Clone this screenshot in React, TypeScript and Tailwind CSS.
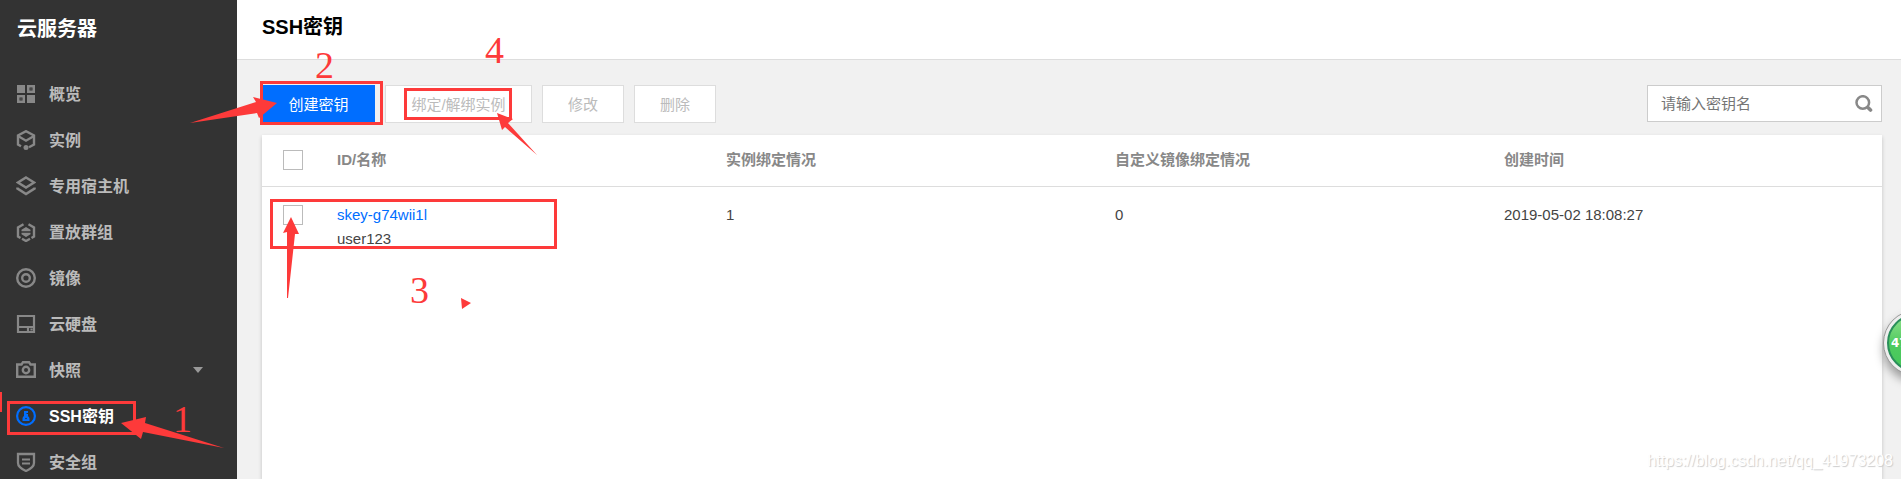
import { ReactNode, useState } from 'react';

const RED = '#fd3a3a';

interface NavItem {
  label: string;
  icon: ReactNode;
  active?: boolean;
  expandable?: boolean;
}

interface SshKey {
  id: string;
  name: string;
  instances: number;
  images: number;
  createdAt: string;
}

const navItems: NavItem[] = [
  {
    label: '概览',
    icon: (
      <>
        <path fill="currentColor" d="M1 1h8v8H1zM11 11h8v8h-8z" />
        <path strokeWidth={2.5} d="M12.25 2.25h5.5v5.5h-5.5zM2.25 12.25h5.5v5.5h-5.5z" />
        <path fill="currentColor" d="M14.5 4.5h1v1h-1zM4.5 14.5h1v1h-1z" />
      </>
    ),
  },
  {
    label: '实例',
    icon: (
      <>
        <path strokeWidth={2.4} d="M5 16.2 2 14.5v-9L10 1.2l8 4.3v9L13 17.2" />
        <path strokeWidth={2.4} d="m2 6 8 4.7L18 6" />
        <circle cx={10} cy={17.5} r={2.5} fill="currentColor" />
      </>
    ),
  },
  {
    label: '专用宿主机',
    icon: (
      <>
        <path strokeWidth={2.4} d="m10 1.500 8 5-8 5-8-5z" />
        <path strokeWidth={2.6} d="M1.500 11.500v1L10 18l8.500-5.500v-1" />
      </>
    ),
  },
  {
    label: '置放群组',
    icon: (
      <>
        <path strokeWidth={2.4} d="M7.500 2.200 2 5.500v9l2.500 1.500M12.500 2.200 18 5.500v9L15.500 16M6 16.800l4 2.200 4-2.200" />
        <path fill="currentColor" d="m10 5 4.500 2.800v1.400h-9V7.800zM10 15l4.500-2.800v-1.400h-9v1.400z" />
      </>
    ),
  },
  {
    label: '镜像',
    icon: (
      <>
        <circle cx={10} cy={10} r={8.8} strokeWidth={2.4} />
        <circle cx={10} cy={10} r={3.8} strokeWidth={2.4} />
      </>
    ),
  },
  {
    label: '云硬盘',
    icon: <path strokeWidth={2.2} d="M2 2h16v16H2zM2 13h16M12 13v5M15.500 14.500v2" />,
  },
  {
    label: '快照',
    expandable: true,
    icon: (
      <>
        <path strokeWidth={2.4} d="M1.200 4.500h4.300l1.500-2.300h6l1.500 2.300h4.300v12.300H1.200z" />
        <circle cx={10} cy={10} r={3.2} strokeWidth={2.4} />
      </>
    ),
  },
  {
    label: 'SSH密钥',
    active: true,
    icon: (
      <>
        <circle cx={10} cy={10} r={8.9} strokeWidth={2.2} />
        <path fill="currentColor" d="M8 5h4v2h-1.500v1H12v2h-.5c1.500.8 2 1.600 2 2.800V15h-7v-2.200c0-1.200.5-2 1.500-2.800z" />
        <circle cx={10} cy={12.5} r={0.8} fill="#333" />
      </>
    ),
  },
  {
    label: '安全组',
    icon: (
      <>
        <path strokeWidth={2.3} d="M2 2h16v9c0 3.500-3 5.800-8 8-5-2.200-8-4.500-8-8z" />
        <path strokeWidth={2} d="M6 7.500h8M6 11.500h8" />
      </>
    ),
  },
];

const sshKeys: SshKey[] = [
  { id: 'skey-g74wii1l', name: 'user123', instances: 1, images: 0, createdAt: '2019-05-02 18:08:27' },
];

function Sidebar() {
  return (
    <aside className="w-[237px] shrink-0 bg-[#333] font-bold">
      <h2 className="px-[17px] pt-[13px] text-xl leading-8 text-white">云服务器</h2>
      <nav className="mt-[26px]">
        {navItems.map((item) => (
          <a
            key={item.label}
            href="#"
            className={`flex h-[46px] items-center gap-[13px] px-4 text-base ${item.active ? 'text-white' : 'text-[#bbb]'}`}
          >
            <svg
              viewBox="0 0 20 20"
              fill="none"
              stroke="currentColor"
              strokeWidth={0}
              className={`size-5 ${item.active ? 'text-[#006eff]' : 'text-[#888]'}`}
            >
              {item.icon}
            </svg>
            <span className="grow pt-0.5">{item.label}</span>
            {item.expandable && (
              <svg viewBox="0 0 10 6" className="mr-[18px] h-[6px] w-[10px] fill-[#999]">
                <path d="M0 0h10L5 6z" />
              </svg>
            )}
          </a>
        ))}
      </nav>
    </aside>
  );
}

function Toolbar() {
  const [keyword, setKeyword] = useState('');
  const plain = 'h-[38px] border border-[#ddd] bg-white pt-0.5 text-[#bbb]';

  return (
    <div className="flex items-start gap-[10px]">
      <button className="h-[38px] w-[113px] bg-[#006eff] pt-0.5 text-white">创建密钥</button>
      <button className={`${plain} w-[147px]`} disabled>
        绑定/解绑实例
      </button>
      <button className={`${plain} w-[82px]`} disabled>
        修改
      </button>
      <button className={`${plain} w-[82px]`} disabled>
        删除
      </button>
      <div className="ml-auto flex h-[37px] w-[235px] items-center border border-[#ccc] bg-white pr-2 pl-[13px]">
        <input
          type="text"
          aria-label="请输入密钥名"
          placeholder="请输入密钥名"
          value={keyword}
          onChange={(ev) => setKeyword(ev.target.value)}
          className="min-w-0 grow pt-0.5 outline-none placeholder:text-[#757575]"
        />
        <button aria-label="搜索">
          <svg viewBox="0 0 18 18" fill="none" stroke="#888" className="size-[18px]">
            <circle cx={7.8} cy={7.5} r={6.3} strokeWidth={2.5} />
            <path strokeWidth={3.6} strokeLinecap="round" d="m13.200 12.800 2.300 2.300" />
          </svg>
        </button>
      </div>
    </div>
  );
}

function KeyTable() {
  const checkbox = 'block size-5 appearance-none border border-[#bbb] bg-white checked:bg-[#006eff]';

  return (
    <div className="mt-3 grow bg-white shadow-[0_2px_4px_rgba(0,0,0,0.2)]">
      <table className="w-full table-fixed text-left">
        <thead className="text-[#888]">
          <tr className="h-[51px] border-b border-[#ddd]">
            <th className="w-16 pl-[21px]">
              <input type="checkbox" aria-label="全选" className={checkbox} />
            </th>
            <th className="px-[11px]">ID/名称</th>
            <th className="px-[11px]">实例绑定情况</th>
            <th className="px-[11px]">自定义镜像绑定情况</th>
            <th className="px-[11px]">创建时间</th>
          </tr>
        </thead>
        <tbody>
          {sshKeys.map((key) => (
            <tr key={key.id} className="align-top leading-6 text-[#444]">
              <td className="pt-[18px] pl-[21px]">
                <input type="checkbox" aria-label={key.id} className={checkbox} />
              </td>
              <td className="px-[11px] pt-4">
                <a href="#" className="block text-[#006eff]">
                  {key.id}
                </a>
                {key.name}
              </td>
              <td className="px-[11px] pt-4">{key.instances}</td>
              <td className="px-[11px] pt-4">{key.images}</td>
              <td className="px-[11px] pt-4">{key.createdAt}</td>
            </tr>
          ))}
        </tbody>
      </table>
    </div>
  );
}

// Hand-drawn step markers laid over the console
function StepMarkers() {
  return (
    <svg className="pointer-events-none absolute top-0 left-0" width={640} height={479} fill={RED}>
      <g fill="none" stroke={RED} strokeWidth={3}>
        <rect x={8.5} y={402.5} width={126} height={31} />
        <rect x={261.5} y={82.5} width={120} height={41} />
        <rect x={405.5} y={89.5} width={105} height={29} />
        <rect x={271.5} y={200.5} width={284} height={47} />
      </g>
      <rect x={0} y={392} width={2} height={20} />
      <path d="M121 423 146 417 145 423 224 448 143 432 141 439z" />
      <path d="M277 103 253 97 256 102 190 123 257 113 259 118z" />
      <path d="M291 217 299 234 295 234 288 298 287 298 287 232 283 233z" />
      <path d="M497 113 513 119 508 123 537 155 505 127 502 130z" />
      <path d="M461 298 471 303 462 309z" />
      <g className="font-['Liberation_Serif',serif] text-[38px]">
        <text x={173} y={432}>1</text>
        <text x={315} y={78}>2</text>
        <text x={410} y={303}>3</text>
        <text x={485} y={63}>4</text>
      </g>
    </svg>
  );
}

function App() {
  return (
    <div className="relative flex h-screen overflow-hidden bg-[#f1f1f1] font-['Liberation_Sans','Noto_Sans_CJK_SC',sans-serif] text-[15px]">
      <Sidebar />
      <main className="flex min-w-0 grow flex-col">
        <header className="h-[60px] shrink-0 border-b border-[#ddd] bg-white px-[25px] pt-[11px]">
          <h1 className="text-xl leading-8 font-bold text-black">SSH密钥</h1>
        </header>
        <section className="flex grow flex-col pt-[25px] pr-[19px] pl-[25px]">
          <Toolbar />
          <KeyTable />
        </section>
      </main>
      <div className="absolute top-[310px] -right-12 size-[66px] rounded-full border border-[#999] bg-[#eee] p-[3px] shadow-[0_6px_10px_rgba(0,0,0,0.35)]">
        <div className="flex h-full items-center rounded-full border-2 border-[#2a8f5a] bg-linear-to-b from-[#8be08b] via-[#4fcb5f] to-[#45c65a] pl-[2px] font-['DejaVu_Sans',sans-serif] text-xs font-bold text-white">
          47
        </div>
      </div>
      <p className="absolute right-2 bottom-1.5 text-base leading-6 text-white [text-shadow:1px_1px_1px_#ccc]">
        https://blog.csdn.net/qq_41973208
      </p>
      <StepMarkers />
    </div>
  );
}

export default App;
